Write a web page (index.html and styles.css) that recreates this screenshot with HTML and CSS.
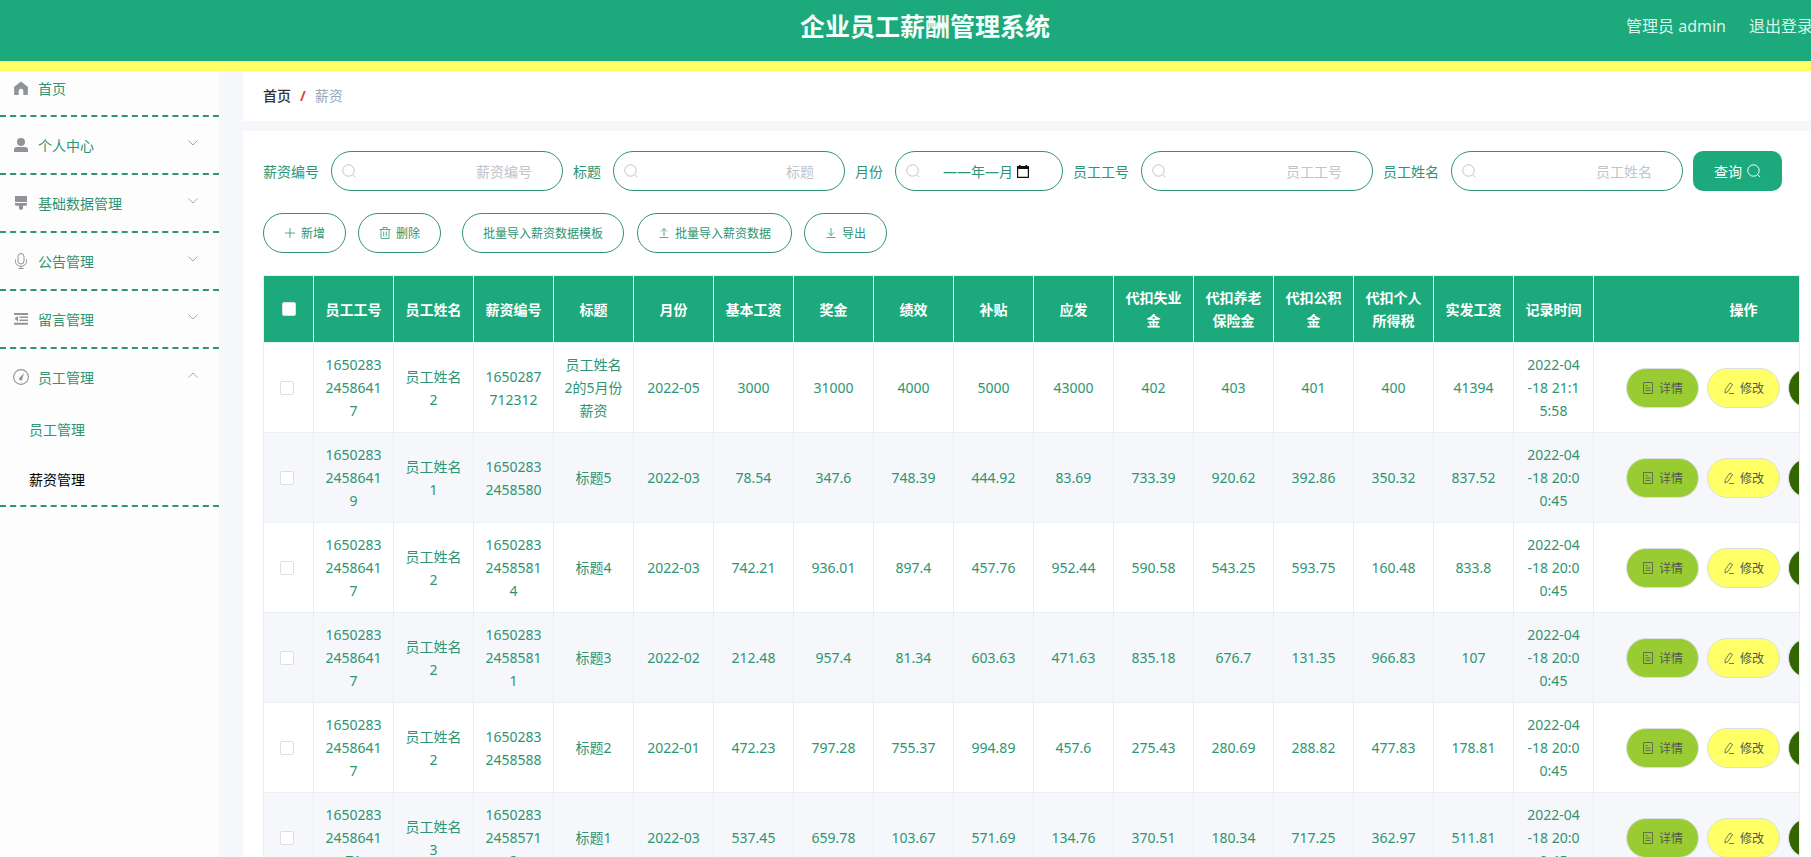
FILE: index.html
```html
<!DOCTYPE html>
<html lang="zh-CN">
<head>
  <meta charset="UTF-8" />
  <title>企业员工薪酬管理系统</title>
  <link rel="stylesheet" href="styles.css">
</head>
<body>
  <!-- icon set -->
  <svg class="sprite" aria-hidden="true">
    <symbol id="i-home" viewBox="-1 -1 16 16"><path fill="currentColor" d="M7 .4l6.400 5a1 1 0 0 1 .5.800V13a.9.9 0 0 1-.9.900H9.300V10A2.300 2.300 0 0 0 4.700 10v3.900H1a.9.9 0 0 1-.9-.9V6.200a1 1 0 0 1 .5-.8z"/></symbol>
    <symbol id="i-user" viewBox="-1 -1 16 16"><path fill="currentColor" d="M7 0a4 4 0 1 1 0 8 4 4 0 0 1 0-8zM3 9h8a3 3 0 0 1 3 3v2H0v-2a3 3 0 0 1 3-3z"/></symbol>
    <symbol id="i-data" viewBox="-1 -1 16 16"><path fill="currentColor" d="M1 0h12v6H1zM1 7h12v1.500a1.300 1.300 0 0 1-1.300 1.300H9v3.200l-2 1-2-1V9.800H2.300A1.300 1.300 0 0 1 1 8.500z"/></symbol>
    <symbol id="i-mic" viewBox="-1 0 16 16"><path fill="none" stroke="currentColor" d="M7 .5a3 3 0 0 1 3 3v4.500a3 3 0 0 1-6 0V3.500a3 3 0 0 1 3-3zM1.500 6.500v2a5.500 4.800 0 0 0 11 0v-2M7 13.300v2M4.500 15.500h5"/></symbol>
    <symbol id="i-fold" viewBox="-1 -2 16 16"><path fill="currentColor" d="M0 0h14v2H0zM5.500 3.500H14v1.600H5.500zM5.500 6.500H14v1.600H5.500zM0 9.800h14v2H0zM4 3v5.600L.4 5.800z"/></symbol>
    <symbol id="i-gauge" viewBox="0 0 16 16"><circle cx="8" cy="8" r="7.400" fill="none" stroke="currentColor" stroke-width="1.100"/><path fill="currentColor" d="M11 4 9.400 9.600a1.700 1.700 0 1 1-2.600-1.200z"/></symbol>
    <symbol id="i-arrow" viewBox="0 0 10 6"><path fill="none" stroke="currentColor" d="M.5.500 5 5 9.500.500"/></symbol>
    <symbol id="i-search" viewBox="0 0 14 14"><circle cx="6.500" cy="6.500" r="5.700" fill="none" stroke="currentColor"/><path stroke="currentColor" d="m10.600 10.600 2.600 2.600"/></symbol>
    <symbol id="i-calendar" viewBox="0 0 12 13"><path fill="currentColor" fill-rule="evenodd" d="M2 0h1.500v1h5V0H10v1h2v12H0V1h2zM1.200 4v7.800h9.600V4z"/></symbol>
    <symbol id="i-plus" viewBox="0 0 12 12"><path stroke="currentColor" stroke-width=".8" d="M6 1v10M1 6h10"/></symbol>
    <symbol id="i-trash" viewBox="0 0 12 12"><path fill="none" stroke="currentColor" stroke-width=".8" d="M.5 2.500h11M4 2.500v-2h4v2M2 2.500v9h8v-9M4.700 4.500v5M7.300 4.500v5"/></symbol>
    <symbol id="i-upload" viewBox="0 0 12 12"><path fill="none" stroke="currentColor" stroke-width=".8" d="M1.500 10.500h9M6 9V1.500M3 4.500l3-3 3 3"/></symbol>
    <symbol id="i-download" viewBox="0 0 12 12"><path fill="none" stroke="currentColor" stroke-width=".8" d="M1.500 10.500h9M6 1v7.500M3 5.500l3 3 3-3"/></symbol>
    <symbol id="i-doc" viewBox="0 0 12 12"><path fill="none" stroke="currentColor" stroke-width=".8" d="M1.500.500h9v11h-9zM3.500 3.500h2M3.500 6h5M3.500 8.500h5"/></symbol>
    <symbol id="i-edit" viewBox="0 0 12 12"><path fill="none" stroke="currentColor" stroke-width=".8" d="M7 1 9.500 2.500 5 9.500 2 11l.3-3.500zM6 11.500h5"/></symbol>
  </svg>

  <header class="header">
    <h1 class="title">企业员工薪酬管理系统</h1>
    <div class="user">
      <span>管理员 admin</span>
      <a href="#">退出登录</a>
    </div>
  </header>

  <div class="layout">
    <nav class="sidebar">
      <a class="menu-item first" href="#"><svg class="icon"><use href="#i-home"/></svg>首页</a>
      <a class="menu-item" href="#"><svg class="icon"><use href="#i-user"/></svg>个人中心<svg class="arrow"><use href="#i-arrow"/></svg></a>
      <a class="menu-item" href="#"><svg class="icon"><use href="#i-data"/></svg>基础数据管理<svg class="arrow"><use href="#i-arrow"/></svg></a>
      <a class="menu-item" href="#"><svg class="icon"><use href="#i-mic"/></svg>公告管理<svg class="arrow"><use href="#i-arrow"/></svg></a>
      <a class="menu-item" href="#"><svg class="icon"><use href="#i-fold"/></svg>留言管理<svg class="arrow"><use href="#i-arrow"/></svg></a>
      <div class="submenu">
        <a class="menu-item open" href="#"><svg class="icon"><use href="#i-gauge"/></svg>员工管理<svg class="arrow"><use href="#i-arrow"/></svg></a>
        <a class="sub-item" href="#">员工管理</a>
        <a class="sub-item active" href="#">薪资管理</a>
      </div>
    </nav>

    <main class="main">
      <div class="breadcrumb">
        <a href="#">首页</a><span class="slash">/</span><span>薪资</span>
      </div>

      <section class="content">
        <form class="search">
          <div class="field">
            <label for="salaryNo">薪资编号</label>
            <div class="box"><svg><use href="#i-search"/></svg><input type="text" id="salaryNo" placeholder="薪资编号"></div>
          </div>
          <div class="field">
            <label for="salaryTitle">标题</label>
            <div class="box"><svg><use href="#i-search"/></svg><input type="text" id="salaryTitle" placeholder="标题"></div>
          </div>
          <div class="field">
            <label for="month">月份</label>
            <div class="box month"><svg><use href="#i-search"/></svg><input type="text" id="month" value="——年—月"><svg class="calendar"><use href="#i-calendar"/></svg></div>
          </div>
          <div class="field">
            <label for="staffNo">员工工号</label>
            <div class="box"><svg><use href="#i-search"/></svg><input type="text" id="staffNo" placeholder="员工工号"></div>
          </div>
          <div class="field">
            <label for="staffName">员工姓名</label>
            <div class="box"><svg><use href="#i-search"/></svg><input type="text" id="staffName" placeholder="员工姓名"></div>
          </div>
          <button type="button" class="query">查询<svg><use href="#i-search"/></svg></button>
        </form>

        <div class="actions">
          <button class="btn"><svg><use href="#i-plus"/></svg>新增</button>
          <button class="btn"><svg><use href="#i-trash"/></svg>删除</button>
          <button class="btn template">批量导入薪资数据模板</button>
          <button class="btn"><svg><use href="#i-upload"/></svg>批量导入薪资数据</button>
          <button class="btn"><svg><use href="#i-download"/></svg>导出</button>
        </div>

        <div class="table-wrap">
          <table>
            <colgroup><col class="col-check"><col span="16"><col class="col-ops"></colgroup>
            <thead>
              <tr>
                <th><input type="checkbox" aria-label="全选"></th>
                <th>员工工号</th>
                <th>员工姓名</th>
                <th>薪资编号</th>
                <th>标题</th>
                <th>月份</th>
                <th>基本工资</th>
                <th>奖金</th>
                <th>绩效</th>
                <th>补贴</th>
                <th>应发</th>
                <th>代扣失业金</th>
                <th>代扣养老保险金</th>
                <th>代扣公积金</th>
                <th>代扣个人所得税</th>
                <th>实发工资</th>
                <th>记录时间</th>
                <th>操作</th>
              </tr>
            </thead>
            <tbody id="rows"></tbody>
          </table>
        </div>
      </section>
    </main>
  </div>

  <script>
    const data = [
      ["165028324586417", "员工姓名2", "1650287712312", "员工姓名2的5月份薪资", "2022-05", 3000, 31000, 4000, 5000, 43000, 402, 403, 401, 400, 41394, "2022-04<br>-18 21:1<br>5:58"],
      ["165028324586419", "员工姓名1", "16502832458580", "标题5", "2022-03", 78.54, 347.6, 748.39, 444.92, 83.69, 733.39, 920.62, 392.86, 350.32, 837.52, "2022-04<br>-18 20:0<br>0:45"],
      ["165028324586417", "员工姓名2", "165028324585814", "标题4", "2022-03", 742.21, 936.01, 897.4, 457.76, 952.44, 590.58, 543.25, 593.75, 160.48, 833.8, "2022-04<br>-18 20:0<br>0:45"],
      ["165028324586417", "员工姓名2", "165028324585811", "标题3", "2022-02", 212.48, 957.4, 81.34, 603.63, 471.63, 835.18, 676.7, 131.35, 966.83, 107, "2022-04<br>-18 20:0<br>0:45"],
      ["165028324586417", "员工姓名2", "16502832458588", "标题2", "2022-01", 472.23, 797.28, 755.37, 994.89, 457.6, 275.43, 280.69, 288.82, 477.83, 178.81, "2022-04<br>-18 20:0<br>0:45"],
      ["1650283245864171", "员工姓名3", "165028324585712", "标题1", "2022-03", 537.45, 659.78, 103.67, 571.69, 134.76, 370.51, 180.34, 717.25, 362.97, 511.81, "2022-04<br>-18 20:0<br>0:45"]
    ];

    const ops = `<td><div class="ops">
      <button class="op detail"><svg><use href="#i-doc"/></svg>详情</button>
      <button class="op edit"><svg><use href="#i-edit"/></svg>修改</button>
      <button class="op remove"><svg><use href="#i-trash"/></svg>删除</button>
    </div></td>`;

    document.getElementById("rows").innerHTML = data.map(row =>
      `<tr><td class="check"><input type="checkbox" aria-label="选择"></td>${row.map(v => `<td>${v}</td>`).join("")}${ops}</tr>`
    ).join("");
  </script>
</body>
</html>
```
FILE: styles.css
```css
* {
  box-sizing: border-box;
}

html {
  scrollbar-width: none;
}

body {
  margin: 0;
  font-family: "Noto Sans", "Noto Sans CJK SC", sans-serif;
  font-size: 14px;
  color: #2f9473;
  background: #f5f7fa;
}

a {
  color: inherit;
  text-decoration: none;
}

button,
input {
  font-family: inherit;
}

.sprite {
  display: none;
}

/* header */
.header {
  display: flex;
  height: 71px;
  padding-left: 240px;
  background: #1ca97b;
  border-bottom: 10px solid #ffff66;
  white-space: nowrap;
  overflow: hidden;
}

.title {
  flex: 1;
  margin: 0;
  padding-top: 8px;
  text-align: center;
  font-size: 25px;
  line-height: 36px;
  color: #f4fffc;
}

.user {
  display: flex;
  gap: 23px;
  width: 201px;
  padding: 14px 0 0 16px;
  font-size: 16px;
  line-height: 24px;
  color: #d8f6ea;
}

.layout {
  display: flex;
  align-items: stretch;
}

/* left menu */
.sidebar {
  flex: 0 0 219px;
  background: #fdfdfd;
}

.menu-item {
  display: flex;
  align-items: center;
  height: 58px;
  padding: 0 20px 0 13px;
  border-bottom: 2px dashed #2f9473;
}

.menu-item.first {
  height: 46px;
  padding-bottom: 10px;
}

.menu-item .icon {
  width: 16px;
  height: 16px;
  margin-right: 9px;
  color: #909399;
}

.menu-item .arrow {
  width: 10px;
  height: 6px;
  margin: 0 1px 4px auto;
  color: #a5a8ad;
}

.submenu {
  border-bottom: 2px dashed #2f9473;
}

.menu-item.open {
  height: 56px;
  border-bottom: none;
}

.open .arrow {
  transform: rotate(180deg);
}

.sub-item {
  display: block;
  padding-left: 29px;
  line-height: 50px;
}

.sub-item.active {
  color: #000;
}

/* main area */
.main {
  flex: 1;
  min-width: 0;
  margin-left: 24px;
}

.breadcrumb {
  height: 50px;
  padding-left: 20px;
  margin-bottom: 10px;
  background: #fff;
  line-height: 50px;
  color: #97a8be;
}

.breadcrumb a {
  color: #303133;
  font-weight: 500;
}

.slash {
  margin: 0 9px;
  font-weight: 700;
  color: #e0452f;
}

.content {
  padding: 20px 11px 20px 20px;
  background: #fff;
}

.search {
  display: flex;
  gap: 10px;
  margin-bottom: 22px;
}

.field {
  display: flex;
  align-items: center;
  gap: 12px;
  white-space: nowrap;
}

.box {
  display: flex;
  align-items: center;
  width: 232px;
  height: 40px;
  padding: 0 30px 0 10px;
  border: 1px solid #2f9473;
  border-radius: 20px;
}

.box svg {
  flex: none;
  width: 14px;
  height: 14px;
  color: #c0c4cc;
}

.box input {
  flex: 1;
  min-width: 0;
  padding: 0;
  border: none;
  outline: none;
  background: none;
  text-align: right;
  font-size: 14px;
  color: #2f9473;
}

.box input::placeholder {
  color: #c0c4cc;
}

.box.month {
  width: 168px;
  padding-right: 33px;
}

.box .calendar {
  width: 12px;
  height: 13px;
  margin-left: 4px;
  color: #111;
}

.query {
  display: flex;
  align-items: center;
  justify-content: center;
  gap: 5px;
  width: 89px;
  height: 40px;
  padding: 0;
  border: none;
  border-radius: 10px;
  background: #1ca97b;
  font-size: 14px;
  color: #fff;
}

.query svg {
  width: 14px;
  height: 14px;
}

.actions {
  display: flex;
  gap: 12px;
  margin-bottom: 22px;
}

.btn {
  display: flex;
  align-items: center;
  gap: 5px;
  height: 40px;
  padding: 0 20px;
  border: 1px solid #2f9473;
  border-radius: 20px;
  background: #fff;
  font-size: 12px;
  color: #2f9473;
}

.btn.template {
  margin: 0 1px 0 9px;
}

.btn svg,
.op svg {
  width: 12px;
  height: 12px;
}

/* table */
.table-wrap {
  border: 1px solid #ebeef5;
  overflow: hidden;
}

table {
  width: 1630px;
  table-layout: fixed;
  border-collapse: separate;
  border-spacing: 0;
}

col {
  width: 80px;
}

.col-check {
  width: 50px;
}

.col-ops {
  width: 300px;
}

th,
td {
  padding: 10px;
  border-right: 1px solid #ebeef5;
  border-bottom: 1px solid #ebeef5;
  text-align: center;
  line-height: 23px;
  word-break: break-all;
}

th {
  background: #1ca97b;
  color: #fff;
}

tbody tr:nth-child(even) {
  background: #f5f7fa;
}

td.check {
  padding-right: 14px;
}

input[type="checkbox"] {
  appearance: none;
  display: block;
  width: 14px;
  height: 14px;
  margin: 0 auto;
  border: 1px solid #dcdfe6;
  border-radius: 2px;
  background: #fff;
}

.ops {
  display: flex;
  justify-content: center;
  gap: 8px;
}

.op {
  display: flex;
  align-items: center;
  gap: 5px;
  height: 40px;
  padding: 0 15px;
  border: 1px solid #dcdfe6;
  border-radius: 20px;
  font-size: 12px;
  color: #555;
}

.detail {
  background: #99cc33;
}

.edit {
  background: #ffff66;
}

.remove {
  background: #336600;
  color: #fff;
}
```
